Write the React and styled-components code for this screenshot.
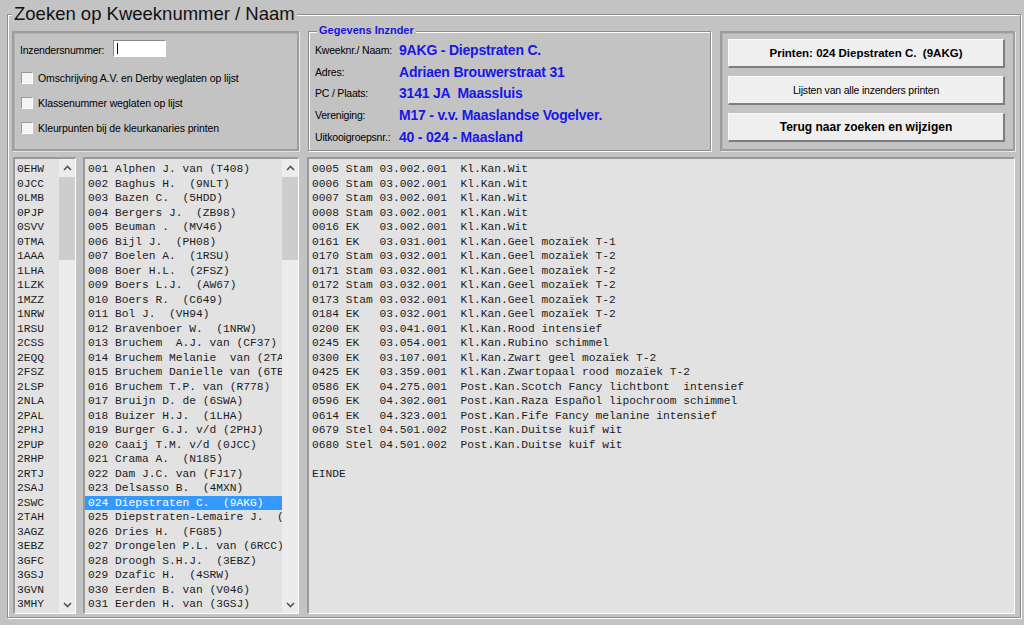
import React from "react";
import styled, { createGlobalStyle } from "styled-components";

const codes = [
  "0EHW", "0JCC", "0LMB", "0PJP", "0SVV", "0TMA", "1AAA", "1LHA", "1LZK", "1MZZ",
  "1NRW", "1RSU", "2CSS", "2EQQ", "2FSZ", "2LSP", "2NLA", "2PAL", "2PHJ", "2PUP",
  "2RHP", "2RTJ", "2SAJ", "2SWC", "2TAH", "3AGZ", "3EBZ", "3GFC", "3GSJ", "3GVN",
  "3MHY",
];

const names = [
  "001 Alphen J. van (T408)",
  "002 Baghus H.  (9NLT)",
  "003 Bazen C.  (5HDD)",
  "004 Bergers J.  (ZB98)",
  "005 Beuman .  (MV46)",
  "006 Bijl J.  (PH08)",
  "007 Boelen A.  (1RSU)",
  "008 Boer H.L.  (2FSZ)",
  "009 Boers L.J.  (AW67)",
  "010 Boers R.  (C649)",
  "011 Bol J.  (VH94)",
  "012 Bravenboer W.  (1NRW)",
  "013 Bruchem  A.J. van (CF37)",
  "014 Bruchem Melanie  van (2TAH)",
  "015 Bruchem Danielle van (6TBN)",
  "016 Bruchem T.P. van (R778)",
  "017 Bruijn D. de (6SWA)",
  "018 Buizer H.J.  (1LHA)",
  "019 Burger G.J. v/d (2PHJ)",
  "020 Caaij T.M. v/d (0JCC)",
  "021 Crama A.  (N185)",
  "022 Dam J.C. van (FJ17)",
  "023 Delsasso B.  (4MXN)",
  "024 Diepstraten C.  (9AKG)",
  "025 Diepstraten-Lemaire J.  (7LMD)",
  "026 Dries H.  (FG85)",
  "027 Drongelen P.L. van (6RCC)",
  "028 Droogh S.H.J.  (3EBZ)",
  "029 Dzafic H.  (4SRW)",
  "030 Eerden B. van (V046)",
  "031 Eerden H. van (3GSJ)",
];

const report = [
  "0005 Stam 03.002.001  Kl.Kan.Wit",
  "0006 Stam 03.002.001  Kl.Kan.Wit",
  "0007 Stam 03.002.001  Kl.Kan.Wit",
  "0008 Stam 03.002.001  Kl.Kan.Wit",
  "0016 EK   03.002.001  Kl.Kan.Wit",
  "0161 EK   03.031.001  Kl.Kan.Geel mozaïek T-1",
  "0170 Stam 03.032.001  Kl.Kan.Geel mozaïek T-2",
  "0171 Stam 03.032.001  Kl.Kan.Geel mozaïek T-2",
  "0172 Stam 03.032.001  Kl.Kan.Geel mozaïek T-2",
  "0173 Stam 03.032.001  Kl.Kan.Geel mozaïek T-2",
  "0184 EK   03.032.001  Kl.Kan.Geel mozaïek T-2",
  "0200 EK   03.041.001  Kl.Kan.Rood intensief",
  "0245 EK   03.054.001  Kl.Kan.Rubino schimmel",
  "0300 EK   03.107.001  Kl.Kan.Zwart geel mozaïek T-2",
  "0425 EK   03.359.001  Kl.Kan.Zwartopaal rood mozaïek T-2",
  "0586 EK   04.275.001  Post.Kan.Scotch Fancy lichtbont  intensief",
  "0596 EK   04.302.001  Post.Kan.Raza Español lipochroom schimmel",
  "0614 EK   04.323.001  Post.Kan.Fife Fancy melanine intensief",
  "0679 Stel 04.501.002  Post.Kan.Duitse kuif wit",
  "0680 Stel 04.501.002  Post.Kan.Duitse kuif wit",
  "",
  "EINDE",
];

const info = [
  ["Kweeknr./ Naam:", "9AKG - Diepstraten C."],
  ["Adres:", "Adriaen Brouwerstraat 31"],
  ["PC / Plaats:", "3141 JA  Maassluis"],
  ["Vereniging:", "M17 - v.v. Maaslandse Vogelver."],
  ["Uitkooigroepsnr.:", "40 - 024 - Maasland"],
];

const options = [
  "Omschrijving A.V. en Derby weglaten op lijst",
  "Klassenummer weglaten op lijst",
  "Kleurpunten bij de kleurkanaries printen",
];

const App = () => {
  return (
    <Screen>
      <GlobalStyle />
      <Frame>
        <FrameTitle>{"Zoeken op Kweeknummer / Naam"}</FrameTitle>
        <TopRow>
          <OptionsPanel>
            <FieldRow>
              <FieldLabel>{"Inzendersnummer:"}</FieldLabel>
              <NumberInput>
                <Caret />
              </NumberInput>
            </FieldRow>
            {options.map((text) => (
              <CheckRow key={text}>
                <CheckBox />
                <CheckLabel>{text}</CheckLabel>
              </CheckRow>
            ))}
          </OptionsPanel>

          <InfoGroup>
            <GroupTitle>{"Gegevens Inznder"}</GroupTitle>
            {info.map(([label, value]) => (
              <InfoRow key={label}>
                <InfoLabel>{label}</InfoLabel>
                <InfoValue>{value}</InfoValue>
              </InfoRow>
            ))}
          </InfoGroup>

          <ActionPanel>
            <ActionButton $bold $size="11.5px">
              {"Printen: 024 Diepstraten C.  (9AKG)"}
            </ActionButton>
            <ActionButton $size="10.5px">
              {"Lijsten van alle inzenders printen"}
            </ActionButton>
            <ActionButton $bold $size="12px">
              {"Terug naar zoeken en wijzigen"}
            </ActionButton>
          </ActionPanel>
        </TopRow>

        <BottomRow>
          <ListBox $width="63px">
            <ListText $pad="2px">
              {codes.map((c) => (
                <ListItem key={c}>{c}</ListItem>
              ))}
            </ListText>
            <ScrollBar />
          </ListBox>

          <ListBox $width="216px">
            <ListText $pad="3px">
              {names.map((n) => (
                <ListItem key={n} $selected={n.startsWith("024")}>
                  {n}
                </ListItem>
              ))}
            </ListText>
            <ScrollBar />
          </ListBox>

          <ReportBox>
            <ListText $pad="3px">
              {report.map((line, i) => (
                <ListItem key={i}>{line || " "}</ListItem>
              ))}
            </ListText>
          </ReportBox>
        </BottomRow>
      </Frame>
    </Screen>
  );
};

const ScrollBar = () => (
  <ScrollTrack>
    <ScrollArrow>
      <svg width="9" height="6" viewBox="0 0 9 6">
        <path d="M1 5 L4.5 1.5 L8 5" fill="none" stroke="#555" strokeWidth="1.6" />
      </svg>
    </ScrollArrow>
    <ScrollThumb />
    <ScrollArrow $bottom>
      <svg width="9" height="6" viewBox="0 0 9 6">
        <path d="M1 1 L4.5 4.5 L8 1" fill="none" stroke="#555" strokeWidth="1.6" />
      </svg>
    </ScrollArrow>
  </ScrollTrack>
);

const GlobalStyle = createGlobalStyle`
  html, body {
    margin: 0;
    padding: 0;
    background: #c3c3c3;
  }
  body {
    font-family: "Liberation Sans", Arial, sans-serif;
    color: #000;
  }
`;

const Screen = styled.div`
  width: 1024px;
  height: 625px;
  box-sizing: border-box;
  padding: 14px 6px 7px 7px;
  background: #c3c3c3;
  display: flex;
  overflow: hidden;
`;

const Frame = styled.div`
  position: relative;
  flex: 1;
  display: flex;
  flex-direction: column;
  gap: 6px;
  padding: 16px 5px 3px 4px;
  border: 1px solid #8e8e8e;
  box-shadow: inset 1px 1px 0 #fff, 1px 1px 0 #fff;
`;

const FrameTitle = styled.div`
  position: absolute;
  top: -12px;
  left: 4px;
  padding: 0 2px;
  background: #c3c3c3;
  font-size: 18.5px;
  line-height: 22px;
  color: #111;
`;

const TopRow = styled.div`
  display: flex;
  gap: 9px;
  height: 120px;
`;

const raisedPanel = `
  box-sizing: border-box;
  border: 2px solid #9d9d9d;
  box-shadow: inset 1px 1px 0 #b4b4b4, 1px 1px 0 #e6e6e6;
`;

const OptionsPanel = styled.div`
  ${raisedPanel}
  width: 287px;
  padding: 7px 7px 0 7px;
  display: flex;
  flex-direction: column;
`;

const FieldRow = styled.div`
  display: flex;
  align-items: center;
  gap: 7px;
  height: 17px;
  margin-left: -1px;
  margin-bottom: 8px;
`;

const FieldLabel = styled.span`
  font-size: 10.5px;
  letter-spacing: -0.2px;
  width: 86px;
  padding-top: 2px;
`;

const NumberInput = styled.div`
  width: 53px;
  height: 17px;
  box-sizing: border-box;
  background: #fff;
  border: 1px solid #fff;
  border-top-color: #8a8a8a;
  border-left-color: #8a8a8a;
  display: flex;
  align-items: center;
  padding-left: 3px;
`;

const Caret = styled.span`
  width: 1px;
  height: 11px;
  background: #000;
`;

const CheckRow = styled.div`
  display: flex;
  align-items: center;
  gap: 5px;
  height: 25px;
`;

const CheckBox = styled.span`
  width: 12px;
  height: 12px;
  box-sizing: border-box;
  background: #f4f4f4;
  border: 1px solid #fff;
  border-top-color: #9a9a9a;
  border-left-color: #9a9a9a;
`;

const CheckLabel = styled.span`
  font-size: 10.5px;
  letter-spacing: -0.1px;
  padding-top: 1px;
`;

const InfoGroup = styled.div`
  position: relative;
  box-sizing: border-box;
  width: 403px;
  padding: 7px 5px 0 6px;
  border: 1px solid #8e8e8e;
  box-shadow: inset 1px 1px 0 #fff, 1px 1px 0 #fff;
  display: flex;
  flex-direction: column;
`;

const GroupTitle = styled.div`
  position: absolute;
  top: -8px;
  left: 8px;
  padding: 0 2px;
  background: #c3c3c3;
  color: #1616d8;
  font-size: 11px;
  font-weight: bold;
  line-height: 13px;
`;

const InfoRow = styled.div`
  display: flex;
  align-items: center;
  height: 21.75px;
`;

const InfoLabel = styled.span`
  width: 84px;
  font-size: 10.5px;
  letter-spacing: -0.2px;
`;

const InfoValue = styled.span`
  color: #1717e6;
  font-weight: bold;
  font-size: 14px;
  letter-spacing: -0.2px;
  white-space: pre;
`;

const ActionPanel = styled.div`
  ${raisedPanel}
  width: 295px;
  padding: 6px 8px 0 6px;
  display: flex;
  flex-direction: column;
  gap: 8px;
`;

const ActionButton = styled.button`
  height: 29px;
  box-sizing: border-box;
  background: #efefef;
  border-style: solid;
  border-width: 1px 2px 2px 1px;
  border-color: #fafafa #7e7e7e #7e7e7e #fafafa;
  font-family: "Liberation Sans", Arial, sans-serif;
  font-size: ${(p) => p.$size};
  font-weight: ${(p) => (p.$bold ? "bold" : "normal")};
  letter-spacing: ${(p) => (p.$bold ? "0" : "-0.2px")};
  color: #000;
  padding: 0;
  white-space: pre;
`;

const BottomRow = styled.div`
  flex: 1;
  display: flex;
  gap: 7px;
  padding-left: 1px;
  min-height: 0;
`;

const sunken = `
  box-sizing: border-box;
  background: #e2e2e2;
  border-style: solid;
  border-width: 2px 1px 1px 2px;
  border-color: #9a9a9a #fdfdfd #fdfdfd #9a9a9a;
  overflow: hidden;
`;

const ListBox = styled.div`
  ${sunken}
  width: ${(p) => p.$width};
  display: flex;
`;

const ReportBox = styled.div`
  ${sunken}
  flex: 1;
  margin-left: 1px;
  display: flex;
`;

const ListText = styled.div`
  flex: 1;
  min-width: 0;
  padding-top: 3px;
  font-family: "Liberation Mono", "Courier New", monospace;
  font-size: 11.25px;
  line-height: 14.5px;
  color: #1c1c1c;
  & > div {
    padding-left: ${(p) => p.$pad};
  }
`;

const ListItem = styled.div`
  white-space: pre;
  overflow: hidden;
  height: 14.5px;
  background: ${(p) => (p.$selected ? "#3399ff" : "transparent")};
  color: ${(p) => (p.$selected ? "#fff" : "inherit")};
`;

const ScrollTrack = styled.div`
  width: 16px;
  flex-shrink: 0;
  background: #ececec;
  display: flex;
  flex-direction: column;
`;

const ScrollArrow = styled.div`
  height: 17px;
  display: flex;
  align-items: center;
  justify-content: center;
  margin-top: ${(p) => (p.$bottom ? "auto" : "0")};
`;

const ScrollThumb = styled.div`
  margin-top: 1px;
  height: 83px;
  background: #cdcdcd;
`;

export default App;
